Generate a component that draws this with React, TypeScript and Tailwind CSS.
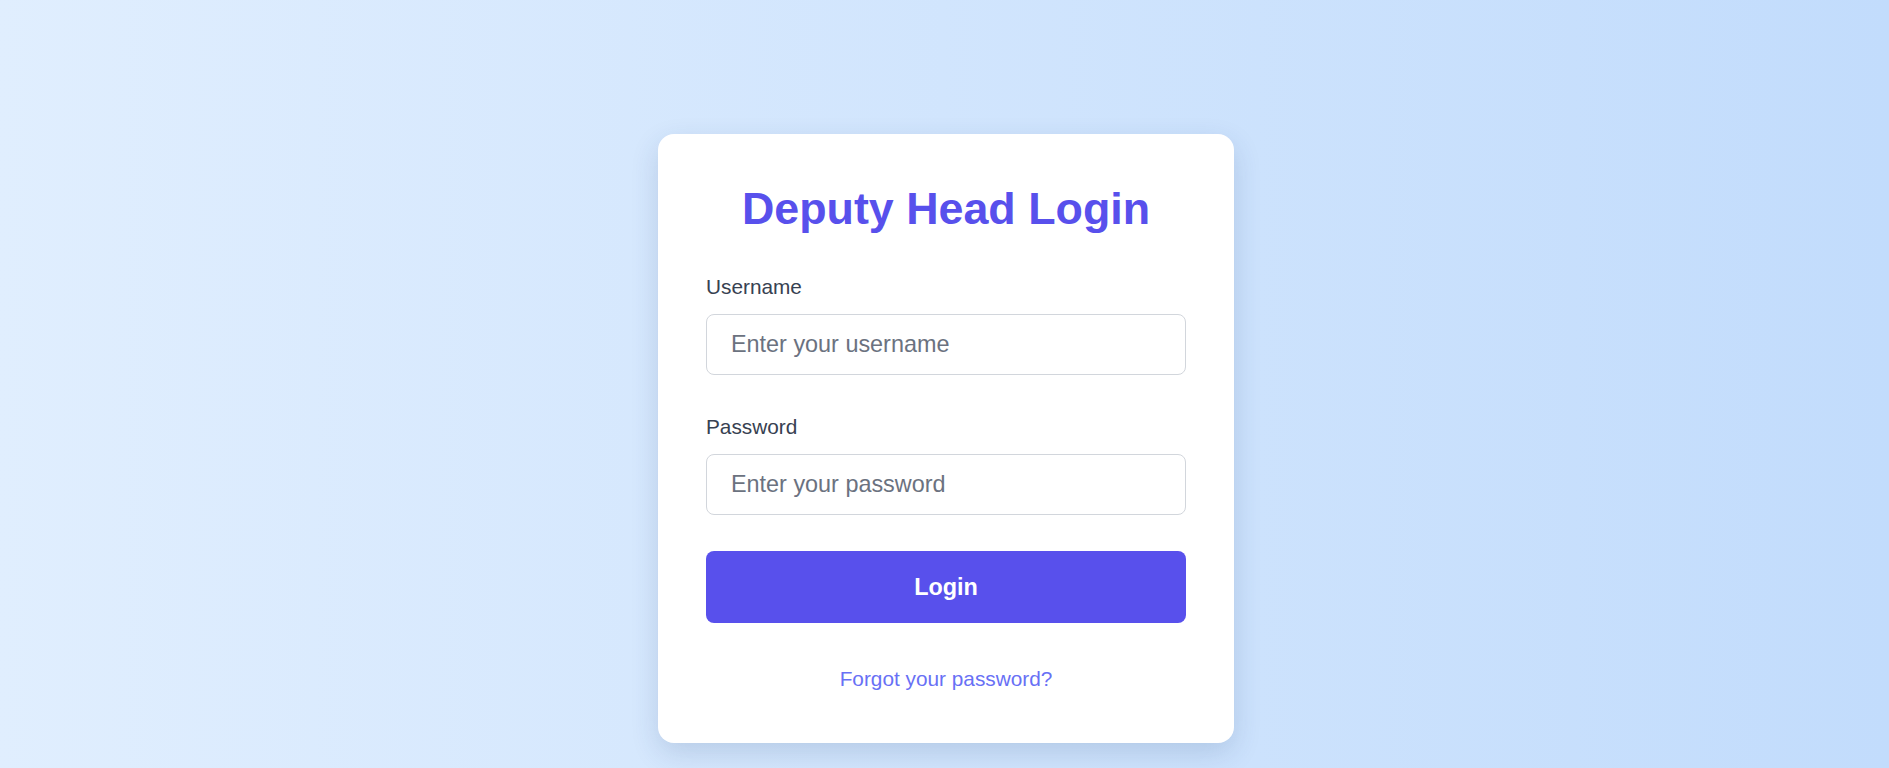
import React, { ChangeEvent, FormEvent, useState } from 'react';

export default function App() {
  const [username, setUsername] = useState('');
  const [password, setPassword] = useState('');

  const handleSubmit = (event: FormEvent<HTMLFormElement>) => {
    event.preventDefault();
  };

  return (
    <div className="min-h-screen w-full bg-linear-to-r from-[#e0eefe] to-[#c2dcfc] flex justify-center pt-[134px] pb-6 pl-[3px] font-['Liberation_Sans',Arial,sans-serif]">
      <form
        onSubmit={handleSubmit}
        className="w-[576px] h-fit bg-white rounded-2xl p-12 shadow-[0_10px_28px_rgba(30,60,110,0.16)]"
      >
        <h1 className="text-center text-[44.8px] leading-[52px] font-bold text-[#5850ec] mb-[37px]">
          Deputy Head Login
        </h1>

        <div className="mb-9">
          <label htmlFor="username" className="block text-[20.8px] leading-[1.5] text-[#374151] mb-3">
            Username
          </label>
          <input
            id="username"
            type="text"
            value={username}
            onChange={(e: ChangeEvent<HTMLInputElement>) => setUsername(e.target.value)}
            placeholder="Enter your username"
            className="block w-full h-[61px] px-[24px] text-[23.4px] text-[#374151] placeholder:text-[#6b7280] border border-[#d2d6dc] rounded-lg outline-none"
          />
        </div>

        <div className="mb-9">
          <label htmlFor="password" className="block text-[20.8px] leading-[1.5] text-[#374151] mb-3">
            Password
          </label>
          <input
            id="password"
            type="password"
            value={password}
            onChange={(e: ChangeEvent<HTMLInputElement>) => setPassword(e.target.value)}
            placeholder="Enter your password"
            className="block w-full h-[61px] px-[24px] text-[23.4px] text-[#374151] placeholder:text-[#6b7280] border border-[#d2d6dc] rounded-lg outline-none"
          />
        </div>

        <button
          type="submit"
          className="block w-full h-[72px] rounded-lg bg-[#5850ec] text-white text-[23.4px] font-bold"
        >
          Login
        </button>

        <div className="mt-10 text-center text-[20.8px] leading-[1.5]">
          <a href="#" className="text-[#6870f5]">
            Forgot your password?
          </a>
        </div>
      </form>
    </div>
  );
}
